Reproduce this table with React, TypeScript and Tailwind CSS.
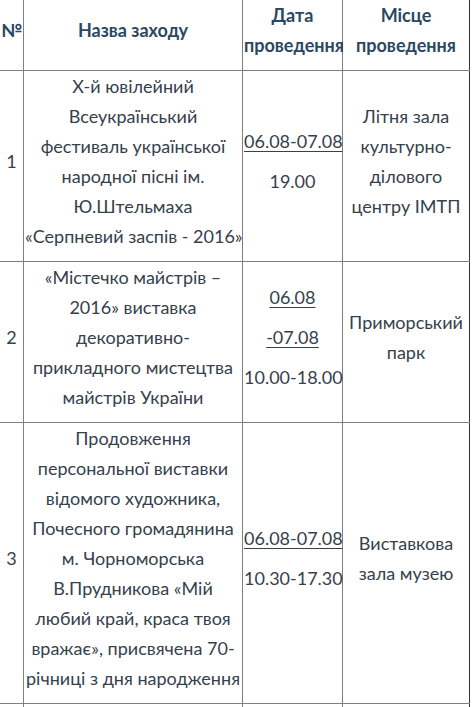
import React from "react";

const cell = "border border-[#7f7f7f] px-px py-0 text-center align-middle whitespace-nowrap";
const P = ({ children }: { children: React.ReactNode }) => <p className="mb-[10px]">{children}</p>;
const D = ({ children }: { children: React.ReactNode }) => (
  <p className="mb-[10px]"><span className="underline decoration-1 underline-offset-[3px]">{children}</span></p>
);

export default function App() {
  return (
    <div className="bg-white w-[472px] h-[707px] overflow-hidden" style={{ fontFamily: "Lato, 'Noto Sans', sans-serif" }}>
      <table className="table-fixed w-[471px] border-collapse -ml-px -mt-px text-[18px] leading-[30px] text-[#35414d]">
        <colgroup>
          <col className="w-[24px]" />
          <col className="w-[219px]" />
          <col className="w-[100px]" />
          <col className="w-[127px]" />
        </colgroup>
        <thead>
          <tr className="font-bold text-[#2b4862]">
            <th className={cell}><P>№</P></th>
            <th className={cell}><P>Назва заходу</P></th>
            <th className={cell}><P>Дата<br />проведення</P></th>
            <th className={`${cell} border-r-[#333]`}><P>Місце<br />проведення</P></th>
          </tr>
        </thead>
        <tbody>
          <tr>
            <td className={cell}><P>1</P></td>
            <td className={cell}><P>Х-й ювілейний<br />Всеукраїнський<br />фестиваль української<br />народної пісні ім.<br />Ю.Штельмаха<br />«Серпневий заспів - 2016»</P></td>
            <td className={cell}><D>06.08-07.08</D><P>19.00</P></td>
            <td className={`${cell} border-r-[#333]`}><P>Літня зала<br />культурно-<br />ділового<br />центру ІМТП</P></td>
          </tr>
          <tr>
            <td className={cell}><P>2</P></td>
            <td className={cell}><P>«Містечко майстрів –<br />2016» виставка<br />декоративно-<br />прикладного мистецтва<br />майстрів України</P></td>
            <td className={cell}><D>06.08</D><D>-07.08</D><P>10.00-18.00</P></td>
            <td className={`${cell} border-r-[#333]`}><P>Приморський<br />парк</P></td>
          </tr>
          <tr>
            <td className={cell}><P>3</P></td>
            <td className={cell}><P>Продовження<br />персональної виставки<br />відомого художника,<br />Почесного громадянина<br />м. Чорноморська<br />В.Прудникова «Мій<br />любий край, краса твоя<br />вражає», присвячена 70-<br />річниці з дня народження</P></td>
            <td className={cell}><D>06.08-07.08</D><P>10.30-17.30</P></td>
            <td className={`${cell} border-r-[#333]`}><P>Виставкова<br />зала музею</P></td>
          </tr>
          <tr>
            <td className={cell}><P>&nbsp;</P></td>
            <td className={cell}><P>&nbsp;</P></td>
            <td className={cell}><P>&nbsp;</P></td>
            <td className={`${cell} border-r-[#333]`}><P>&nbsp;</P></td>
          </tr>
        </tbody>
      </table>
    </div>
  );
}
